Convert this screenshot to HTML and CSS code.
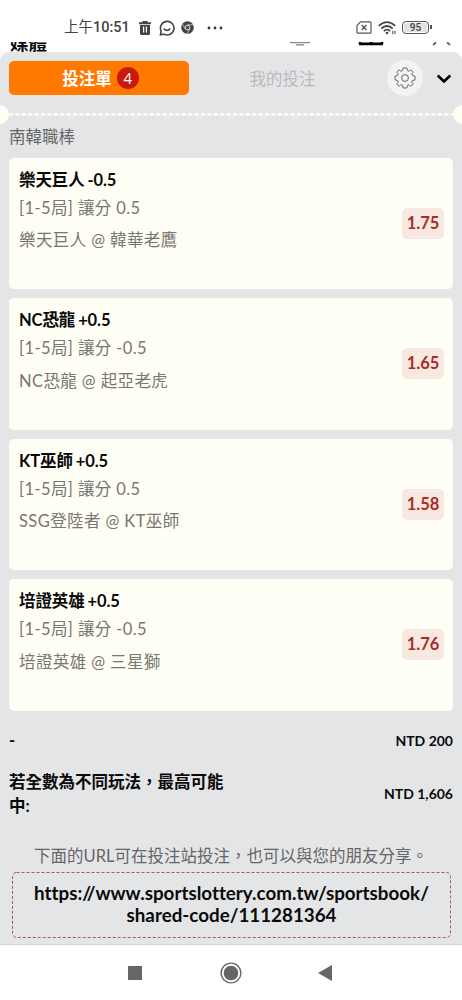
FILE: index.html
```html
<!DOCTYPE html>
<html lang="zh-Hant">
<head>
    <meta charset="utf-8">
    <meta name="viewport" content="width=device-width, initial-scale=1">
    <title>投注單</title>
    <link rel="stylesheet" href="styles.css">
</head>
<body>
    <div class="status">
        <span class="time"><span>上午</span>10:51</span>
        <svg class="trash" width="12" height="14" viewBox="0 0 12 14">
            <path d="M0 1.2h3.5V0h5v1.2H12v2H0zM1 4h10v8.5q0 1.5-1.5 1.5h-7Q1 14 1 12.500zM4 5.500v6h1.200v-6zM6.800 5.500v6H8v-6z" fill="#444" fill-rule="evenodd"/>
        </svg>
        <svg class="chat" width="16" height="16" viewBox="0 0 16 16" fill="none" stroke="#444" stroke-width="1.600">
            <path d="M1.500 14.700l.6-3.700A6.800 6.800 0 1 1 5 14.100z"/>
            <path d="M4.800 8.600q3.200 3.600 6.400 0"/>
        </svg>
        <svg class="chrome" width="13" height="13" viewBox="0 0 13 13">
            <circle cx="6.500" cy="6.500" r="6.300" fill="#444"/>
            <path d="M6.500 3.800H12M4.200 7.900L1.500 3.200M8.800 7.900L6 12.600" stroke="#fff" stroke-width=".6"/>
            <circle cx="6.500" cy="6.500" r="2.400" fill="#555" stroke="#fff" stroke-width=".8"/>
        </svg>
        <svg class="dots" width="16" height="4" viewBox="0 0 16 4" fill="#333">
            <circle cx="2" cy="2" r="1.400"/><circle cx="8" cy="2" r="1.400"/><circle cx="14" cy="2" r="1.400"/>
        </svg>
        <svg class="sim" width="16" height="13" viewBox="0 0 16 13" fill="none" stroke="#555">
            <path d="M4.500.8H14q1 0 1 1v9.400q0 1-1 1H2q-1 0-1-1V4.400z" stroke-width="1.200"/>
            <path d="M5.800 4l4.600 5M10.400 4L5.800 9" stroke-width="1.400"/>
        </svg>
        <svg class="wifi" width="19" height="14" viewBox="0 0 19 14" fill="none" stroke="#444" stroke-width="1.700">
            <path d="M.8 4.800q8.200-7.500 16.400 0M3.300 7.500q5.700-5 11.400 0M5.800 10.100q3.200-2.800 6.400 0"/>
            <circle cx="9" cy="12" r="1.300" fill="#444" stroke="none"/>
            <path d="M14.800 9.800v3.400M17 9.800v3.400" stroke-width="1"/>
        </svg>
        <div class="battery"><span>95</span></div>
    </div>

    <!-- site header, mostly covered by the bet slip -->
    <div class="header">
        <span class="logo">媒體</span>
        <svg class="header-icons" width="170" height="4" viewBox="0 0 170 4" fill="none">
            <path d="M0 .6h20" stroke="#888" stroke-width="1.200"/>
            <path d="M6 2.800h8" stroke="#999" stroke-width="1.600"/>
            <path d="M69 1.900h24M70 0v2M81 0v1.500M92 0v2" stroke="#000" stroke-width="2.600"/>
            <path d="M143 3l3-2.700M160 3l-3-2.700" stroke="#666" stroke-width="1.800"/>
        </svg>
    </div>

    <div class="slip">
        <div class="tabs">
            <div class="tab active">投注單 <span class="badge">4</span></div>
            <div class="tab">我的投注</div>
            <div class="settings">
                <svg width="22" height="22" viewBox="-11 -11 22 22" fill="none" stroke="#555" stroke-width=".9" stroke-linejoin="round">
                    <circle r="3.400"/>
                    <path d="M-1.800-10H1.800L2.600-7.400 4.200-6.700 5.800-8.300 8.300-5.800 6.700-4.200 7.400-2.600 10-1.800V1.800L7.400 2.600 6.700 4.200 8.300 5.800 5.800 8.300 4.200 6.700 2.600 7.400 1.800 10H-1.800L-2.600 7.400-4.200 6.700-5.800 8.300-8.300 5.800-6.700 4.200-7.400 2.600-10 1.800V-1.800L-7.400-2.600-6.700-4.200-8.300-5.800-5.800-8.300-4.200-6.700-2.600-7.400z"/>
                </svg>
            </div>
            <svg class="arrow" width="16" height="10" viewBox="0 0 16 10" fill="none" stroke="#000" stroke-width="2.700">
                <path d="M1.700 1.500L8 7.500l6.300-6"/>
            </svg>
        </div>
        <div class="divider"><i></i><svg width="444" height="3"><path d="M0 1.500h444" stroke="#fffef4" stroke-width="2.600" stroke-dasharray="4.200 2.200"/></svg><i></i></div>

        <div class="league">南韓職棒</div>

        <div class="card">
            <div>
                <h3>樂天巨人 -0.5</h3>
                <p>[1-5局] 讓分 0.5</p>
                <p>樂天巨人 @ 韓華老鷹</p>
            </div>
            <span class="odds">1.75</span>
        </div>
        <div class="card">
            <div>
                <h3>NC恐龍 +0.5</h3>
                <p>[1-5局] 讓分 -0.5</p>
                <p>NC恐龍 @ 起亞老虎</p>
            </div>
            <span class="odds">1.65</span>
        </div>
        <div class="card">
            <div>
                <h3>KT巫師 +0.5</h3>
                <p>[1-5局] 讓分 0.5</p>
                <p>SSG登陸者 @ KT巫師</p>
            </div>
            <span class="odds">1.58</span>
        </div>
        <div class="card">
            <div>
                <h3>培證英雄 +0.5</h3>
                <p>[1-5局] 讓分 -0.5</p>
                <p>培證英雄 @ 三星獅</p>
            </div>
            <span class="odds">1.76</span>
        </div>

        <div class="row stake">
            <span>-</span>
            <span class="amount">NTD 200</span>
        </div>
        <div class="row win">
            <span class="label">若全數為不同玩法，最高可能中:</span>
            <span class="amount">NTD 1,606</span>
        </div>

        <div class="hint">下面的URL可在投注站投注，也可以與您的朋友分享。</div>
        <div class="share">
            <svg class="share-border" width="439" height="66"><rect x=".5" y=".5" width="438" height="65" rx="4" fill="none" stroke="#b5524f" stroke-dasharray="3 2"/></svg>
            https://www.sportslottery.com.tw/sportsbook/<br>shared-code/111281364
        </div>
    </div>

    <div class="nav">
        <svg width="14" height="14"><rect width="14" height="14" fill="#666"/></svg>
        <svg class="home" width="22" height="22" viewBox="0 0 22 22">
            <circle cx="11" cy="11" r="9.900" fill="none" stroke="#666" stroke-width="1.400"/>
            <circle cx="11" cy="11" r="7.300" fill="#666"/>
        </svg>
        <svg width="14" height="16"><path d="M14 0v16L0 8z" fill="#666"/></svg>
    </div>
</body>
</html>
```

FILE: styles.css
```css
* {
    box-sizing: border-box;
}

body {
    margin: 0;
    height: 1000px;
    overflow: hidden;
    background-color: white;
    font-family: Lato, "Noto Sans CJK TC", sans-serif;
    font-size: 16.5px;
    font-variant-ligatures: none;
    color: #0a0a0a;
}

svg {
    display: block;
    flex: none;
}

.status {
    height: 42px;
    padding: 13px 33px 0 64px;
    display: flex;
    align-items: center;
}

.time {
    width: 75px;
    font-family: Roboto, "Noto Sans CJK TC", sans-serif;
    font-size: 14.5px;
    line-height: 20px;
    font-weight: 500;
    color: #444;
    white-space: nowrap;
}

.time span {
    font-weight: normal;
}

.chat {
    margin-left: 8px;
}

.chrome {
    margin-left: 6px;
}

.dots {
    margin-left: 13px;
}

.sim {
    margin-left: auto;
}

.wifi {
    margin-left: 6px;
}

.battery {
    width: 27px;
    height: 13px;
    margin-left: 5px;
    padding: 1px;
    border: 1.5px solid #555;
    border-radius: 4px;
    position: relative;
}

.battery span {
    display: block;
    border-radius: 2px;
    background-color: #e2e2e2;
    font: 500 10px/9px Roboto, sans-serif;
    text-align: center;
    color: #444;
}

.battery::after {
    content: "";
    position: absolute;
    right: -4px;
    top: 3px;
    width: 2px;
    height: 4px;
    background-color: #555;
}

.header {
    height: 10px;
    padding: 0 2px 0 10px;
    display: flex;
    justify-content: space-between;
    align-items: flex-start;
    overflow: hidden;
}

.logo {
    margin-top: -11px;
    line-height: 24px;
    font-size: 18.5px;
    font-weight: bold;
}

.slip {
    height: 893px;
    padding: 9px 9px 0;
    border-radius: 9px 9px 0 0;
    border-bottom: 1px solid #d3d3d3;
    background-color: #e4e5e7;
}

.tabs {
    height: 34px;
    display: flex;
    align-items: center;
}

.tab {
    width: 180px;
    height: 34px;
    display: flex;
    align-items: center;
    justify-content: center;
    border-radius: 5px;
    color: #b9babc;
}

.tab + .tab {
    width: 187px;
}

.active {
    padding-left: 3px;
    background-color: #ff7900;
    color: white;
    font-weight: bold;
}

.badge {
    width: 22px;
    height: 22px;
    margin-left: 5px;
    border-radius: 50%;
    background-color: #c9190f;
    font-size: 15px;
    font-weight: normal;
    line-height: 22px;
    text-align: center;
}

.settings {
    width: 36px;
    height: 36px;
    margin-left: 11px;
    display: flex;
    align-items: center;
    justify-content: center;
    border-radius: 50%;
    background-color: #f2f3f5;
}

.arrow {
    margin: 2px 0 0 13px;
}

.divider {
    height: 20px;
    margin: 9px -9px 0;
    display: flex;
    align-items: center;
    justify-content: space-between;
    overflow: hidden;
}

.divider i {
    width: 19px;
    height: 19px;
    flex: none;
    margin: 0 -10px;
    border-radius: 50%;
    background-color: #fffef4;
}

.league {
    height: 33.5px;
    line-height: 27px;
    color: #666;
}

.card {
    height: 131.5px;
    margin-bottom: 9px;
    padding: 9.4px 9px 0 10px;
    display: flex;
    justify-content: space-between;
    border-radius: 5px;
    background-color: #fffef5;
}

.card h3 {
    height: 28px;
    margin: 0;
    font-size: 16.5px;
    letter-spacing: -0.1px;
    word-spacing: -1px;
    line-height: 26px;
}

.card p {
    height: 32.5px;
    margin: 0;
    font-size: 16.5px;
    letter-spacing: 0.4px;
    line-height: 26px;
    color: #777671;
}

.odds {
    width: 42px;
    height: 31px;
    margin-top: 41px;
    border-radius: 5px;
    background-color: #f7e8e2;
    font-size: 16.5px;
    font-weight: bold;
    line-height: 31px;
    text-align: center;
    color: #ad2b24;
}

.row {
    display: flex;
    justify-content: space-between;
    align-items: center;
    font-weight: bold;
}

.stake {
    height: 41px;
}

.win {
    height: 66px;
}

.label {
    width: 220px;
    line-height: 24px;
}

.amount {
    font-size: 14px;
}

.hint {
    height: 45px;
    padding-top: 13px;
    line-height: 32px;
    text-align: center;
    color: #666;
    white-space: nowrap;
}

.share {
    height: 66px;
    margin: 0 2px 0 3px;
    padding-top: 10.5px;
    position: relative;
    font-size: 18.8px;
    font-weight: bold;
    line-height: 22px;
    text-align: center;
    white-space: nowrap;
}

.share-border {
    position: absolute;
    left: 0;
    top: 0;
}

.nav {
    height: 55px;
    padding: 0 130px 0 128px;
    display: flex;
    justify-content: space-between;
    align-items: center;
}

.home {
    margin-left: 2px;
}
```
